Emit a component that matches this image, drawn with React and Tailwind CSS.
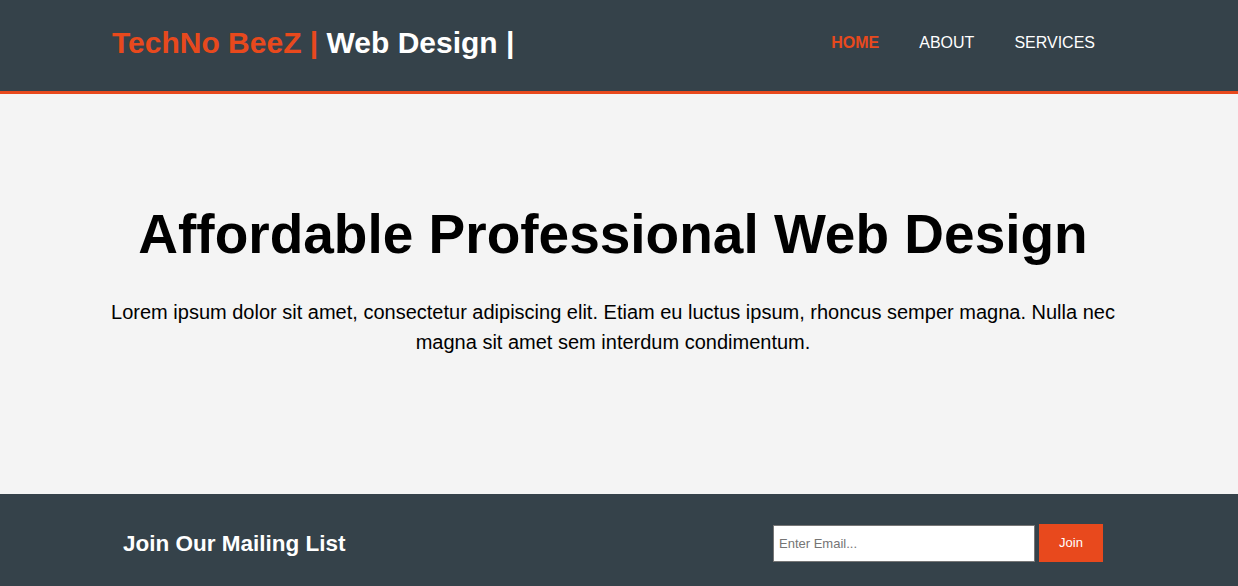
export default function App() {
  const font = { fontFamily: '"Liberation Sans", Arial, sans-serif' };
  return (
    <div style={font} className="w-[1238px] min-h-[586px] bg-[#f4f4f4]">
      <header className="h-[94px] bg-[#35424a] border-b-[3px] border-[#e8491d] flex justify-between items-start pl-[112px] pr-[143px]">
        <div className="mt-[25px] text-[30px] leading-[36px] font-bold whitespace-nowrap">
          <span className="text-[#e8491d]">TechNo BeeZ |</span>
          <span className="text-white"> Web Design |</span>
        </div>
        <nav className="mt-[33px]">
          <ul className="flex gap-[40px] text-[16px] leading-[20px] uppercase">
            <li className="text-[#e8491d] font-bold">Home</li>
            <li className="text-white">About</li>
            <li className="text-white">Services</li>
          </ul>
        </nav>
      </header>
      <section className="h-[400px] bg-[#f4f4f4] text-black flex flex-col items-center">
        <h1 className="mt-[108px] ml-[-12px] text-[55px] leading-[64px] font-bold whitespace-nowrap">
          Affordable Professional Web Design
        </h1>
        <p className="mt-[31px] w-[1030px] ml-[-12px] text-center text-[20px] leading-[30px]">
          Lorem ipsum dolor sit amet, consectetur adipiscing elit. Etiam eu luctus ipsum, rhoncus semper magna. Nulla nec magna sit amet sem interdum condimentum.
        </p>
      </section>
      <section className="h-[92px] bg-[#35424a] text-white flex justify-between items-start pl-[123px] pr-[135px]">
        <h2 className="mt-[36px] text-[22.5px] leading-[28px] font-bold">Join Our Mailing List</h2>
        <form className="mt-[30px] flex items-start gap-[4px]">
          <input
            type="email"
            placeholder="Enter Email..."
            className="mt-[1px] w-[262px] h-[37px] bg-white border border-[#767676] px-[5px] text-[13px] text-black placeholder:text-[#757575] outline-none"
            style={font}
          />
          <button
            type="button"
            className="w-[64px] h-[38px] bg-[#e8491d] text-white text-[13px]"
            style={font}
          >
            Join
          </button>
        </form>
      </section>
    </div>
  );
}
